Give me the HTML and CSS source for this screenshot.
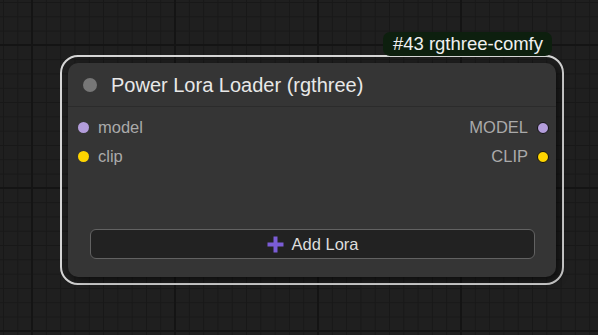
FILE: index.html
```html
<!DOCTYPE html>
<html lang="en">

<head>
    <meta charset="UTF-8">
    <meta name="viewport" content="width=device-width, initial-scale=1.0">
    <title>Power Lora Loader</title>
    <link rel="stylesheet" href="styles.css">
</head>

<body>

    <div class="canvas">
        <div class="selection">
            <div class="badge">#43 rgthree-comfy</div>

            <div class="node">
                <div class="node-title">
                    <span class="title-dot"></span>
                    <span class="title-text">Power Lora Loader (rgthree)</span>
                </div>

                <div class="node-body">
                    <div class="slot-row">
                        <div class="slot-in"><span class="dot dot-model"></span>model</div>
                        <div class="slot-out">MODEL<span class="dot dot-model out"></span></div>
                    </div>
                    <div class="slot-row">
                        <div class="slot-in"><span class="dot dot-clip"></span>clip</div>
                        <div class="slot-out">CLIP<span class="dot dot-clip out"></span></div>
                    </div>

                    <div class="spacer"></div>

                    <button class="add-btn">
                        <svg width="17" height="17" viewBox="0 0 17 17">
                            <path d="M8.5 0.5v16M0.5 8.5h16" stroke="#7b5cd6" stroke-width="4" />
                        </svg>
                        Add Lora
                    </button>
                </div>
            </div>
        </div>
    </div>

</body>

</html>
```

FILE: styles.css
```css
body {
    margin: 0;
    height: 335px;
    overflow: hidden;
    font-family: "Liberation Sans", Arial, sans-serif;
    background-color: #1f1f1f;
    /* graph grid: major lines every 10 cells */
    background-image:
        linear-gradient(to right, #141414 2px, transparent 2px),
        linear-gradient(to bottom, #141414 2px, transparent 2px),
        linear-gradient(to right, #181818 1px, transparent 1px),
        linear-gradient(to bottom, #181818 1px, transparent 1px);
    background-size: 143px 143px, 143px 143px, 14.3px 14.3px, 14.3px 14.3px;
    background-position: 31px 0, 0 44px, 3px 0, 0 2px;
}

.canvas {
    padding: 55px 0 0 60px;
}

.selection {
    position: relative;
    width: 488px;
    padding: 6px;
    border: 2px solid #d6d6d6;
    border-radius: 18px;
}

.badge {
    position: absolute;
    top: -25px;
    right: 10px;
    height: 24px;
    padding: 0 9px 0 10px;
    background: #0d1f0e;
    color: #f0f0f0;
    font-size: 18.5px;
    line-height: 24px;
    border-radius: 7px;
    white-space: nowrap;
}

.node {
    height: 214px;
    background: #353535;
    border-radius: 10px;
    box-shadow: 3px 3px 8px rgba(0, 0, 0, 0.6);
    display: flex;
    flex-direction: column;
}

.node-title {
    height: 44px;
    border-bottom: 1px solid #2b2b2b;
    display: flex;
    align-items: center;
    padding-left: 15px;
    gap: 14px;
    box-sizing: border-box;
}

.title-dot {
    width: 14px;
    height: 14px;
    border-radius: 50%;
    background: #777;
}

.title-text {
    color: #e8e8e8;
    font-size: 20px;
    padding-top: 1px;
}

.node-body {
    flex: 1;
    display: flex;
    flex-direction: column;
    padding: 6px 7px 18px 10px;
}

.slot-row {
    height: 29px;
    display: flex;
    align-items: center;
    justify-content: space-between;
    font-size: 16.5px;
    color: #aaaaaa;
}

.slot-in,
.slot-out {
    display: flex;
    align-items: center;
    gap: 9px;
}

.dot {
    width: 11px;
    height: 11px;
    border-radius: 50%;
    box-sizing: border-box;
}

.dot.out {
    width: 12px;
    height: 12px;
    border: 1px solid #111;
}

.dot-model {
    background: #b39ddb;
}

.dot-clip {
    background: #ffd500;
}

.spacer {
    flex: 1;
}

.add-btn {
    height: 30px;
    margin: 0 14px 0 12px;
    background: #222;
    border: 1.5px solid #626262;
    border-radius: 6px;
    color: #dddddd;
    font-family: inherit;
    font-size: 16.5px;
    display: flex;
    align-items: center;
    justify-content: center;
    gap: 8px;
    padding: 0;
}
```
